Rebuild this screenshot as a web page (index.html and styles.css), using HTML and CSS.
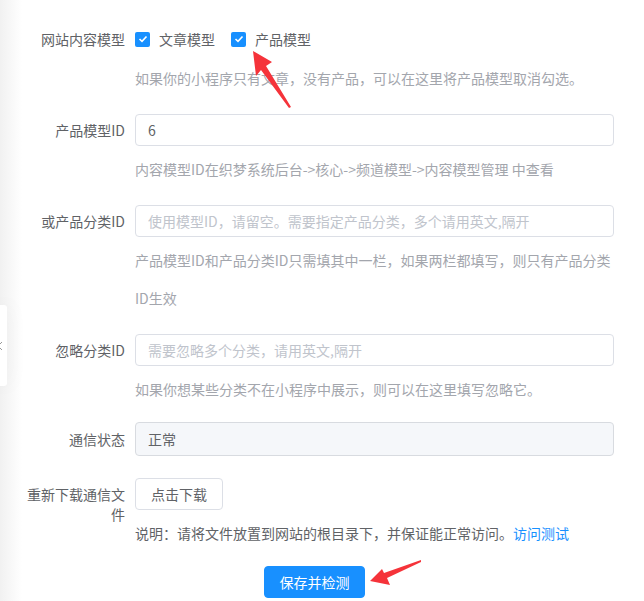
FILE: index.html
```html
<!DOCTYPE html>
<html lang="zh-CN">
<head>
  <meta charset="UTF-8">
  <meta name="viewport" content="width=device-width, initial-scale=1.0">
  <title>小程序设置</title>
  <link rel="stylesheet" href="styles.css">
</head>
<body>
  <div class="side-tab">
    <svg width="8" height="10" viewBox="0 0 8 10"><path d="M5 1 L1 5 L5 9" fill="none" stroke="#999" stroke-width="1"/></svg>
  </div>

  <form class="form">
    <div class="form-item">
      <label class="label">网站内容模型</label>
      <div class="content">
        <div class="checks">
          <span class="check">
            <span class="box"><svg width="10" height="8" viewBox="0 0 10 8"><path d="M1.5 4 L4 6.3 L8.5 1.5" fill="none" stroke="#fff" stroke-width="1.6"/></svg></span>
            文章模型
          </span>
          <span class="check">
            <span class="box"><svg width="10" height="8" viewBox="0 0 10 8"><path d="M1.5 4 L4 6.3 L8.5 1.5" fill="none" stroke="#fff" stroke-width="1.6"/></svg></span>
            产品模型
          </span>
        </div>
        <div class="help">如果你的小程序只有文章，没有产品，可以在这里将产品模型取消勾选。</div>
      </div>
    </div>

    <div class="form-item">
      <label class="label">产品模型ID</label>
      <div class="content">
        <input class="input" type="text" value="6">
        <div class="help">内容模型ID在织梦系统后台-&gt;核心-&gt;频道模型-&gt;内容模型管理 中查看</div>
      </div>
    </div>

    <div class="form-item">
      <label class="label">或产品分类ID</label>
      <div class="content">
        <input class="input" type="text" placeholder="使用模型ID，请留空。需要指定产品分类，多个请用英文,隔开">
        <div class="help">产品模型ID和产品分类ID只需填其中一栏，如果两栏都填写，则只有产品分类<br>ID生效</div>
      </div>
    </div>

    <div class="form-item">
      <label class="label">忽略分类ID</label>
      <div class="content">
        <input class="input" type="text" placeholder="需要忽略多个分类，请用英文,隔开">
        <div class="help">如果你想某些分类不在小程序中展示，则可以在这里填写忽略它。</div>
      </div>
    </div>

    <div class="form-item status-row">
      <label class="label">通信状态</label>
      <div class="content">
        <input class="input disabled" type="text" value="正常" disabled>
      </div>
    </div>

    <div class="form-item">
      <label class="label">重新下载通信文件</label>
      <div class="content">
        <button type="button" class="btn">点击下载</button>
        <div class="help dark">说明：请将文件放置到网站的根目录下，并保证能正常访问。<a href="#" class="link">访问测试</a></div>
      </div>
    </div>

    <div class="actions">
      <button type="button" class="btn primary">保存并检测</button>
    </div>
  </form>

  <svg class="marks" width="644" height="601" viewBox="0 0 644 601">
    <polygon points="253,51 272,62 266,66 291,107 289,108 261,70 256,76" fill="#f5333a"/>
    <polygon points="370,581 382,569 384,573 421,560 421,562 387,578 390,585" fill="#f5333a"/>
  </svg>
</body>
</html>
```

FILE: styles.css
```css
body {
  margin: 0;
  font-family: "Noto Sans CJK SC", "Noto Sans", sans-serif;
  font-size: 14px;
  color: #606266;
  background: linear-gradient(90deg, #f1f1f1 0, #fff 22px);
  height: 601px;
  overflow: hidden;
  position: relative;
}
.side-tab {
  position: absolute;
  left: 0;
  top: 305px;
  width: 7px;
  height: 81px;
  background: #fff;
  border-radius: 0 3px 3px 0;
  box-shadow: 0 0 22px rgba(0,0,0,0.07);
  display: flex;
  align-items: center;
}
.side-tab svg {
  margin-left: -3px;
}
.form {
  padding: 23px 0 0 15px;
  width: 599px;
}
.form-item {
  display: grid;
  grid-template-columns: 120px 1fr;
  margin-bottom: 17px;
}
.status-row {
  margin-top: -3px;
  margin-bottom: 22px;
}
.label {
  text-align: right;
  padding: 6px 10px 0 0;
  line-height: 20px;
  color: #606266;
}
.status-row .label {
  padding-top: 7px;
}
.content {
  min-width: 0;
}
.checks {
  display: flex;
  height: 32px;
  align-items: center;
  gap: 16px;
}
.check {
  display: flex;
  align-items: center;
  gap: 9px;
  color: #606266;
}
.box {
  width: 15px;
  height: 15px;
  border-radius: 2px;
  background: #1890ff;
  display: flex;
  align-items: center;
  justify-content: center;
}
.input {
  display: block;
  box-sizing: border-box;
  width: 100%;
  height: 32px;
  padding: 0 12px;
  border: 1px solid #dcdfe6;
  border-radius: 4px;
  font: inherit;
  color: #606266;
  background: #fff;
  outline: none;
}
.input::placeholder {
  color: #c0c4cc;
}
.input.disabled {
  height: 34px;
  background: #f5f7fa;
  border-color: #d8dbe0;
  color: #606266;
}
.help {
  margin-top: 4px;
  line-height: 38px;
  color: #a3a6ad;
}
.help.dark {
  color: #606266;
}
.link {
  color: #1890ff;
  text-decoration: none;
}
.btn {
  height: 32px;
  padding: 0 15px;
  border: 1px solid #dcdfe6;
  border-radius: 4px;
  background: #fff;
  font: inherit;
  color: #606266;
  cursor: pointer;
}
.actions {
  display: flex;
  justify-content: center;
  margin-top: -3px;
}
.btn.primary {
  background: #1890ff;
  border-color: #1890ff;
  color: #fff;
  width: 101px;
  padding: 0;
}
.marks {
  position: absolute;
  left: 0;
  top: 0;
  pointer-events: none;
}
```
